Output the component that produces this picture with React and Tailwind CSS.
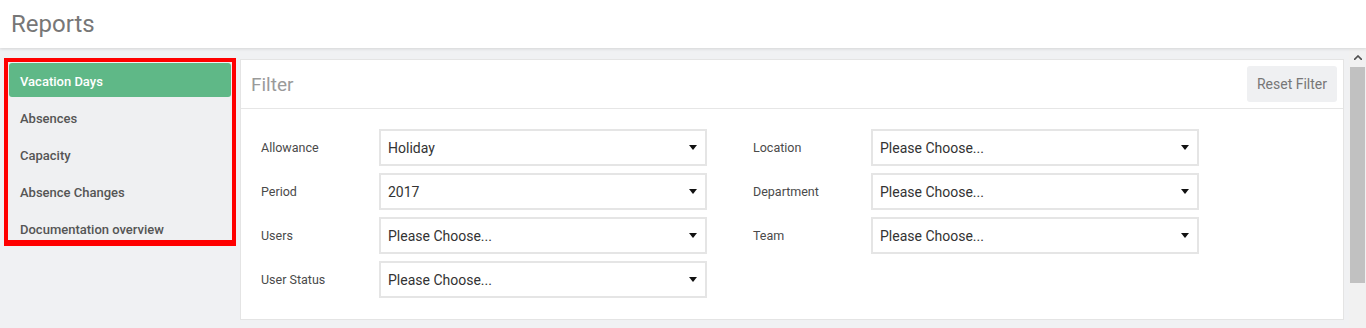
import { useState } from 'react'

const font = { fontFamily: 'Roboto, "Liberation Sans", sans-serif' }

// sidebar entries, first one is the active report
const reports = ['Vacation Days', 'Absences', 'Capacity', 'Absence Changes', 'Documentation overview']

const leftFields = [
  { label: 'Allowance', value: 'Holiday' },
  { label: 'Period', value: '2017' },
  { label: 'Users', value: 'Please Choose...' },
  { label: 'User Status', value: 'Please Choose...' },
]

const rightFields = [
  { label: 'Location', value: 'Please Choose...' },
  { label: 'Department', value: 'Please Choose...' },
  { label: 'Team', value: 'Please Choose...' },
]

function Caret() {
  return (
    <svg width="8" height="5" viewBox="0 0 8 5" className="shrink-0">
      <path d="M0 0 H8 L4 5 Z" fill="#111" />
    </svg>
  )
}

function SelectRow({ label, value }) {
  return (
    <div className="flex items-center h-[37px]">
      <div className="w-[118px] pt-[2px] text-[12.5px] text-[#4a4a4a]">{label}</div>
      <div className="w-[328px] h-[37px] border-2 border-[#e5e5e5] bg-white flex items-center justify-between pl-[7px] pr-[8px]">
        <span className="pt-[2px] text-[14px] text-[#333]">{value}</span>
        <Caret />
      </div>
    </div>
  )
}

export default function App() {
  const [active, setActive] = useState(0)

  return (
    <div className="h-[328px] w-[1366px] overflow-hidden flex flex-col bg-[#f0f1f3]" style={font}>
      {/* ── Page header ── */}
      <div className="h-[48px] shrink-0 bg-white flex items-center pl-[11px] shadow-[0_1px_3px_rgba(0,0,0,0.12)] relative z-10">
        <h1 className="text-[24px] text-[#777] font-normal leading-none">Reports</h1>
      </div>

      <div className="flex flex-1 min-h-0">
        <div className="flex-1 flex items-start pt-[10px] pl-[4px]">
          {/* Report list (outlined) */}
          <div className="w-[232px] border-4 border-[#ff0000] border-b-[6px] bg-[#eff0f2]">
            <div className="h-[178px] overflow-hidden p-px">
              {reports.map((r, i) => (
                <button
                  key={r}
                  onClick={() => setActive(i)}
                  className={
                    'w-full h-[34px] mb-[3px] flex items-center pt-[3px] pl-[11px] pr-[10px] rounded-[3px] text-left text-[13px] font-medium ' +
                    (active === i ? 'bg-[#5fb887] text-white' : 'text-[#555]')
                  }
                >
                  {r}
                </button>
              ))}
            </div>
          </div>

          {/* Filter panel */}
          <div className="ml-[4px] mt-[1px] w-[1104px] bg-white border border-[#e4e4e4]">
            <div className="h-[49px] border-b border-[#e6e6e6] flex items-center justify-between pl-[10px] pr-[6px]">
              <span className="pt-[2px] text-[19px] text-[#9a9a9a]">Filter</span>
              <button className="h-[36px] px-[10px] pt-[1px] rounded-[3px] bg-[#eff0f2] text-[14px] text-[#777]">
                Reset Filter
              </button>
            </div>
            <div className="flex gap-[46px] pl-[20px] pt-[20px] pb-[21px]">
              <div className="flex flex-col gap-[7px]">
                {leftFields.map((f) => (
                  <SelectRow key={f.label} {...f} />
                ))}
              </div>
              <div className="flex flex-col gap-[7px]">
                {rightFields.map((f) => (
                  <SelectRow key={f.label} {...f} />
                ))}
              </div>
            </div>
          </div>
        </div>

        {/* Scrollbar */}
        <div className="w-[17px] shrink-0 bg-[#f1f1f1] flex flex-col items-center">
          <div className="h-[19px] flex items-center justify-center">
            <svg width="8" height="5" viewBox="0 0 8 5">
              <path d="M0 5 L4 1 L8 5" fill="none" stroke="#505050" strokeWidth="1.6" />
            </svg>
          </div>
          <div className="w-[15px] h-[216px] bg-[#c1c1c1]" />
        </div>
      </div>
    </div>
  )
}
